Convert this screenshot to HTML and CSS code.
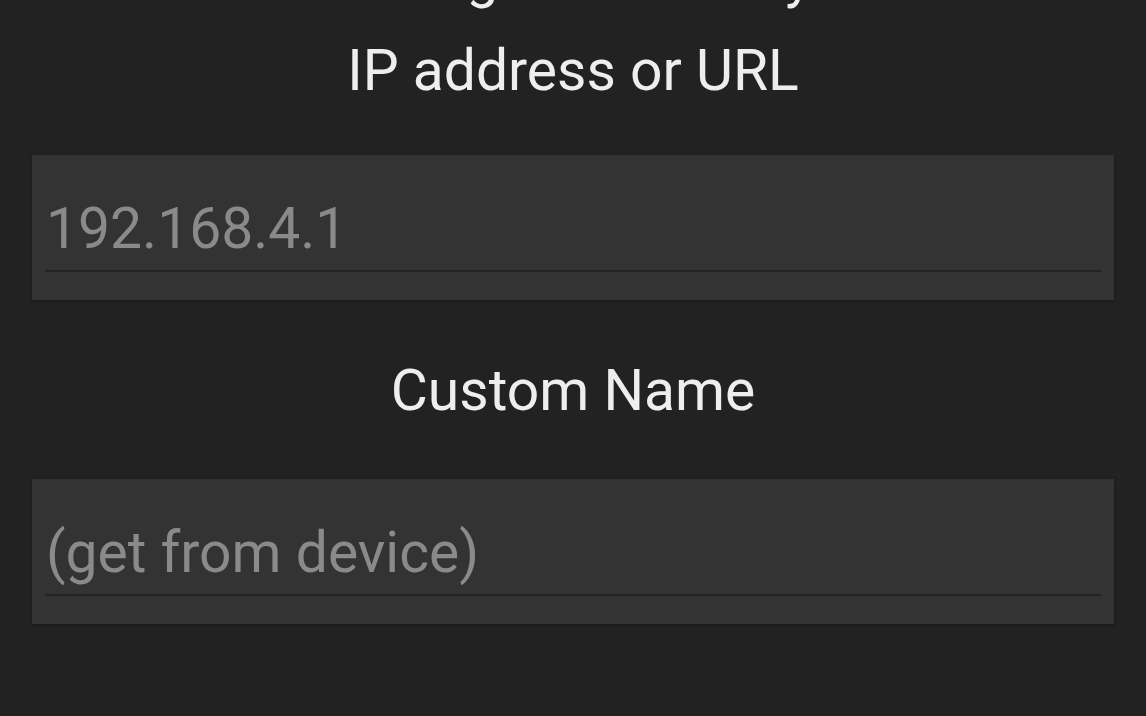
FILE: index.html
```html
<!DOCTYPE html>
<html lang="en">
<head>
<meta charset="utf-8">
<title>Add Device</title>
<link rel="stylesheet" href="styles.css">
</head>
<body>
<main class="screen">
  <div class="title">Configure Gateway</div>
  <label class="label label-ip" for="ip">IP address or URL</label>
  <div class="field field-ip">
    <input class="input" id="ip" type="text" placeholder="192.168.4.1">
  </div>
  <label class="label label-name" for="name">Custom Name</label>
  <div class="field field-name">
    <input class="input" id="name" type="text" placeholder="(get from device)">
  </div>
</main>
</body>
</html>
```
FILE: styles.css
```css
html, body {
  margin: 0;
  padding: 0;
  background: #222222;
  height: 100%;
  overflow: hidden;
}

.screen {
  margin-top: -57px;
  padding: 0 32px;
  display: flex;
  flex-direction: column;
  font-family: Roboto, "Noto Sans", sans-serif;
  font-size: 57px;
  line-height: 67px;
  color: #eeeeee;
}

.title,
.label {
  display: block;
  text-align: center;
}

.label-ip {
  margin-top: 27px;
}

.label-name {
  margin-top: 57px;
}

.field {
  box-sizing: border-box;
  height: 145px;
  background: #333333;
  padding: 40px 14px 0 13px;
  box-shadow: 0 1px 3px rgba(0, 0, 0, 0.35);
}

.field-ip {
  margin-top: 51px;
}

.field-name {
  margin-top: 55px;
}

.input {
  display: block;
  box-sizing: content-box;
  width: 100%;
  height: 67px;
  margin: 0;
  padding: 0 0 8px 1px;
  border: 0;
  border-bottom: 2px solid #242424;
  background: transparent;
  font: inherit;
  line-height: 67px;
  color: #e0e0e0;
  outline: none;
}

.input::placeholder {
  color: #8a8a8a;
  opacity: 1;
}
```
